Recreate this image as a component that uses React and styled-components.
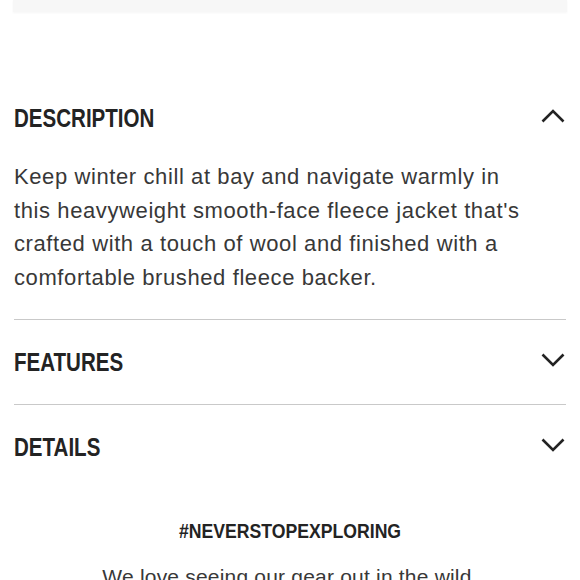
import styled, { createGlobalStyle } from "styled-components";

const GlobalStyle = createGlobalStyle`
  html, body {
    margin: 0;
    padding: 0;
    background: #ffffff;
  }
  body {
    font-family: "Liberation Sans", Arial, sans-serif;
    color: #2b2b2b;
    overflow: hidden;
  }
`;

const Page = styled.div`
  width: 580px;
  height: 580px;
  overflow: hidden;
  padding: 0 14px 0 14px;
  box-sizing: border-box;
`;

const TopPanel = styled.div`
  height: 12px;
  margin: 0 -1px;
  background-color: #f7f7f7;
  box-shadow: 0 1px 2px rgba(0, 0, 0, 0.04);
`;

const Accordion = styled.div`
  margin-top: 64px;
`;

const Section = styled.section`
  border-bottom: ${(p) => (p.$last ? "none" : "1px solid #c9c9c9")};
`;

const SectionHead = styled.div`
  height: 84px;
  display: flex;
  align-items: center;
  justify-content: space-between;
`;

// condensed heading face: narrow the bold sans horizontally
const SectionTitle = styled.h2`
  margin: 0;
  display: inline-block;
  font-weight: 700;
  font-size: 26px;
  color: #232323;
  transform: scaleX(0.79);
  transform-origin: left center;
`;

const Body = styled.p`
  margin: 0;
  padding: 0 36px 25px 0;
  font-size: 22px;
  line-height: 33.5px;
  letter-spacing: 0.6px;
  color: #383838;
  font-weight: 400;
`;

const ChevronIcon = styled.svg`
  margin: 0 1px 5px 0;
  flex-shrink: 0;
`;

const Chevron = ({ up }) => (
  <ChevronIcon width="24" height="14" viewBox="0 0 24 14" fill="none">
    <path
      d={up ? "M1.5 12.5 L12 2 L22.5 12.5" : "M1.5 1.5 L12 12 L22.5 1.5"}
      stroke="#232323"
      strokeWidth="2.6"
    />
  </ChevronIcon>
);

const Explore = styled.div`
  margin-top: 30px;
  text-align: center;
`;

const Hashtag = styled.h3`
  margin: 0;
  font-weight: 700;
  font-size: 21px;
  color: #232323;
  transform: scaleX(0.84);
`;

const ExploreText = styled.p`
  margin: 17px 0 0 0;
  font-size: 21px;
  line-height: 33.5px;
  letter-spacing: 0.2px;
  color: #383838;
`;

const sections = [
  {
    title: "DESCRIPTION",
    open: true,
    body: "Keep winter chill at bay and navigate warmly in this heavyweight smooth-face fleece jacket that's crafted with a touch of wool and finished with a comfortable brushed fleece backer.",
  },
  { title: "FEATURES" },
  { title: "DETAILS" },
];

export default function App() {
  return (
    <Page>
      <GlobalStyle />
      <TopPanel />
      <Accordion>
        {sections.map((s, i) => (
          <Section key={s.title} $last={i === sections.length - 1}>
            <SectionHead>
              <SectionTitle>{s.title}</SectionTitle>
              <Chevron up={s.open} />
            </SectionHead>
            {s.open && <Body>{s.body}</Body>}
          </Section>
        ))}
      </Accordion>
      <Explore>
        <Hashtag>#NEVERSTOPEXPLORING</Hashtag>
        <ExploreText>We love seeing our gear out in the wild.</ExploreText>
      </Explore>
    </Page>
  );
}
